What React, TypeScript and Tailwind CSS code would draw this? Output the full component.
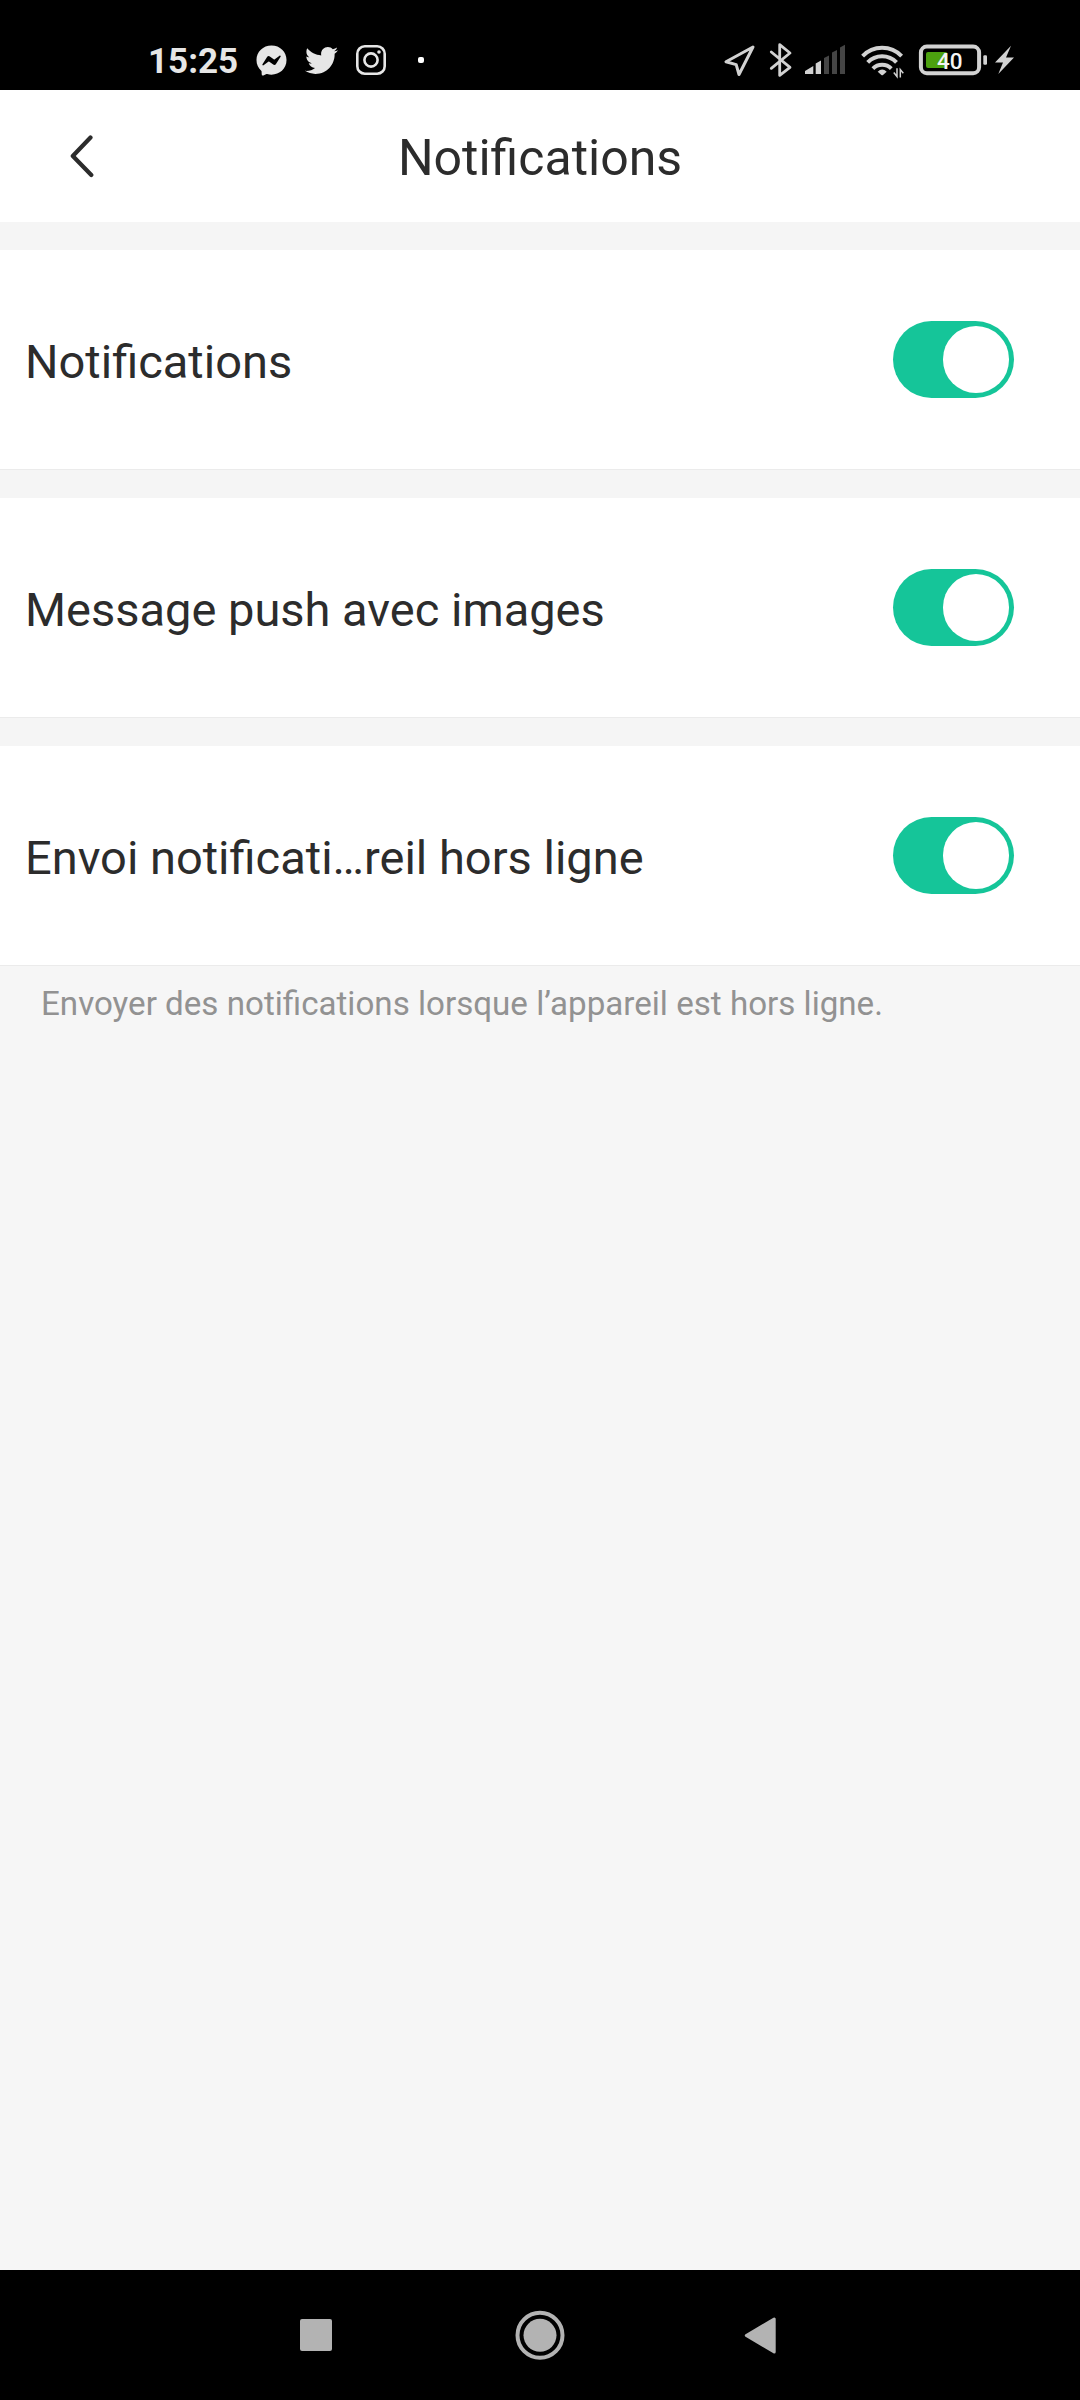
import { FaFacebookMessenger, FaTwitter } from 'react-icons/fa'

type SettingRowProps = {
  label: string
  enabled: boolean
}

const settings: SettingRowProps[] = [
  { label: 'Notifications', enabled: true },
  { label: 'Message push avec images', enabled: true },
  { label: 'Envoi notificati…reil hors ligne', enabled: true },
]

function InstagramIcon() {
  return (
    <svg className="ml-[18px] size-[30px]" viewBox="0 0 30 30" fill="none" stroke="#e6e6e6" strokeWidth="2.6">
      <rect x="1.3" y="1.3" width="27.4" height="27.4" rx="7.5" />
      <circle cx="15" cy="15" r="6.6" />
      <circle cx="23" cy="7" r="1.8" fill="#e6e6e6" stroke="none" />
    </svg>
  )
}

function StatusIcons() {
  return (
    <svg className="h-[90px] w-[310px]" viewBox="710 0 310 90" fill="none" stroke="#d2d2d2">
      {/* location */}
      <path d="M753 47 L726 61.7 L736.2 64.6 L739 74.5 Z" strokeWidth="3" strokeLinejoin="round" />
      {/* bluetooth */}
      <path
        d="M771.3 52 L790 67.3 L779.7 75.3 V44.7 L790 53 L771.3 68.3"
        strokeWidth="2.8"
        strokeLinecap="round"
        strokeLinejoin="round"
      />
      {/* signal */}
      <g stroke="none">
        <path d="M805 74 V71 L813.3 66 V74 Z M815.7 74 V63.5 L821 60.5 V74 Z" fill="#d2d2d2" />
        <path
          d="M824 74 V58 L829 55.5 V74 Z M832 74 V52.5 L837 50 V74 Z M840 74 V47.5 L845 44.7 V74 Z"
          fill="#454545"
        />
      </g>
      {/* wifi */}
      <g strokeWidth="4">
        <path d="M862.6 56.2 A27 27 0 0 1 901.6 56.2" />
        <path d="M867.7 62.4 A20 20 0 0 1 896.5 62.4" />
        <path d="M872.9 68.6 A13 13 0 0 1 891.3 68.6" />
      </g>
      <path d="M877.7 71.8 Q882.2 67.2 886.7 71.8 L883 75 Q882.2 75.6 881.4 75 Z" fill="#d2d2d2" stroke="none" />
      <path d="M897 68.3 V76.5 L893.8 72.5 M900.3 77.5 V69.5 L903.3 73.2" strokeWidth="1.5" />
      {/* battery */}
      <rect x="920.9" y="46.6" width="58.2" height="26.6" rx="6" strokeWidth="4" />
      <rect x="926" y="52" width="21.3" height="16" rx="2" fill="#4ca10f" stroke="none" />
      <rect x="983.3" y="55.3" width="3.7" height="9.4" rx="1.2" fill="#d2d2d2" stroke="none" />
      <text x="937" y="68.6" className="font-['Roboto'] text-[22.5px] font-medium" fill="#f5f5f5" stroke="none">
        40
      </text>
      <path d="M1011 45.7 L995 62.6 H1003 L998.3 74 L1014 57.6 H1006 Z" fill="#d2d2d2" stroke="none" />
    </svg>
  )
}

function StatusBar() {
  return (
    <div className="flex h-[90px] justify-between bg-black pr-[60px] pl-[148px] text-[#e6e6e6]">
      <div className="flex items-center pt-[30px]">
        <span className="w-[108px] pt-[3px] text-[35px] leading-[30px] font-bold">15:25</span>
        <FaFacebookMessenger className="size-[31px]" />
        <FaTwitter className="ml-[18px] size-[33px]" />
        <InstagramIcon />
        <span className="ml-8 size-1.5 rounded-[2px] bg-white" />
      </div>
      <StatusIcons />
    </div>
  )
}

function SettingRow({ label, enabled }: SettingRowProps) {
  return (
    <div className="flex h-[220px] items-center justify-between border-b border-[#ebebeb] bg-white pr-[66px] pl-[25px]">
      <span className="pt-1 text-[47px] leading-[56px]">{label}</span>
      <button
        type="button"
        role="switch"
        aria-checked={enabled}
        aria-label={label}
        className="flex h-[77px] w-[121px] items-center justify-end rounded-full bg-[#15c599] pr-[5px]"
      >
        <span className="size-[66.5px] rounded-full bg-white" />
      </button>
    </div>
  )
}

function NavigationBar() {
  return (
    <div className="flex h-[130px] items-center justify-between bg-black pr-[304px] pl-[300px]">
      <span className="size-8 rounded-[2px] bg-[#b3b3b3]" />
      <svg className="ml-[3px] size-[50px]" viewBox="0 0 50 50">
        <circle cx="25" cy="25.3" r="22.5" fill="none" stroke="#b3b3b3" strokeWidth="4" />
        <circle cx="25" cy="25.3" r="16.5" fill="#b3b3b3" />
      </svg>
      <svg className="h-[37px] w-8" viewBox="0 0 32 37" fill="#b3b3b3" stroke="#b3b3b3">
        <path d="M2.3 18.5 L30.2 2.1 V34.9 Z" strokeWidth="3" strokeLinejoin="round" />
      </svg>
    </div>
  )
}

export default function App() {
  return (
    <main className="flex h-[2400px] w-[1080px] flex-col bg-[#f6f6f6] font-['Roboto',sans-serif] text-[#2c2c2c]">
      <StatusBar />
      <header className="flex h-[132px] items-center bg-white pr-[70px] pl-[70px]">
        <button type="button" aria-label="Retour" className="w-6">
          <svg className="h-[44px] w-6" viewBox="0 0 24 44" fill="none" stroke="#2c2c2c">
            <path d="M20.5 3.5 L2.8 22 L21.3 41" strokeWidth="4.2" strokeLinecap="round" strokeLinejoin="round" />
          </svg>
        </button>
        <h1 className="flex-1 pt-1 pr-6 text-center text-[50px] leading-[58px]">Notifications</h1>
      </header>
      <section className="flex flex-col gap-7 bg-[#f5f5f5] pt-7">
        {settings.map((setting) => (
          <SettingRow key={setting.label} {...setting} />
        ))}
      </section>
      <p className="mt-[18px] flex-1 pl-[41px] text-[33.15px] leading-[40px] text-[#929292]">
        Envoyer des notifications lorsque l’appareil est hors ligne.
      </p>
      <NavigationBar />
    </main>
  )
}
